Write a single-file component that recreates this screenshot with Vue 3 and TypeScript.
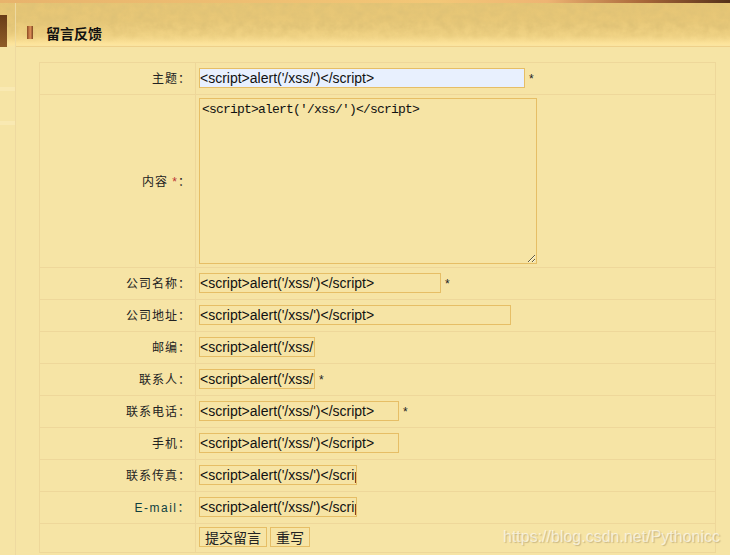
<template>
<div class="page">
    <svg class="texture" width="730" height="46" aria-hidden="true">
        <filter id="blotch">
            <feTurbulence type="fractalNoise" baseFrequency="0.11 0.13" numOctaves="3" seed="9" />
            <feColorMatrix values="0 0 0 0 0.74  0 0 0 0 0.54  0 0 0 0 0.18  0 0 0 2 -0.62" />
        </filter>
        <rect width="730" height="46" filter="url(#blotch)" />
    </svg>
    <div class="side">
        <div class="side-block"></div>
        <div class="side-band band-a"></div>
        <div class="side-band band-b"></div>
    </div>
    <div class="main">
        <div class="head">
            <span class="marker"></span>
            <h2 class="title">留言反馈</h2>
        </div>
        <form class="form" @submit.prevent>
            <table class="fields">
                <tr v-for="row in rows" :key="row.label" :class="{ tall: row.area }">
                    <th :class="{ latin: row.label === 'E-mail' }">{{ row.label }}<span v-if="row.area" class="red"> *</span>：</th>
                    <td>
                        <textarea v-if="row.area" class="area" :value="xss" readonly></textarea>
                        <input v-else class="text" :class="{ filled: row.filled }" :style="{ width: row.width + 'px' }" :value="xss" readonly />
                        <span v-if="row.must" class="must">*</span>
                    </td>
                </tr>
                <tr class="last">
                    <th></th>
                    <td>
                        <button class="btn" type="submit">提交留言</button>
                        <button class="btn" type="reset">重写</button>
                    </td>
                </tr>
            </table>
        </form>
    </div>
    <div class="mark">https://blog.csdn.net/Pythonicc</div>
</div>
</template>
<script setup lang="ts">
interface Row {
    label: string,
    width?: number,
    must?: boolean,
    area?: boolean,
    filled?: boolean,
}

const xss = `<script>alert('/xss/')<` + `/script>`;

const rows: Row[] = [
    { label: '主题', width: 326, must: true, filled: true },
    { label: '内容', area: true },
    { label: '公司名称', width: 242, must: true },
    { label: '公司地址', width: 312 },
    { label: '邮编', width: 116 },
    { label: '联系人', width: 116, must: true },
    { label: '联系电话', width: 200, must: true },
    { label: '手机', width: 200 },
    { label: '联系传真', width: 158 },
    { label: 'E-mail', width: 158 },
];
</script>
<style scoped>
.page {
    position: relative;
    display: flex;
    width: 730px;
    height: 555px;
    overflow: hidden;
    background: linear-gradient(180deg, #e6c575 0, #e8c878 45%, #f0d385 76%, #fde49c 94%, #f6e4a5 100%) top / 100% 47px no-repeat, #f6e4a5;
    font-family: "Liberation Sans", "Noto Sans CJK SC", sans-serif;
    color: #222;
}
.page::before {
    content: '';
    position: absolute;
    z-index: 2;
    left: 0;
    top: 0;
    width: 100%;
    height: 3px;
    background: linear-gradient(90deg, #e8b36c 0%, #f3c777 60%, #eeb473 75%, #a9683a 88%, #54301a 100%);
}
.texture {
    position: absolute;
    left: 0;
    top: 0;
    -webkit-mask-image: linear-gradient(180deg, #000 55%, transparent 92%);
    mask-image: linear-gradient(180deg, #000 55%, transparent 92%);
}
.side {
    position: relative;
    flex: none;
    width: 15px;
    border-right: 1px solid #eed9a0;
}
.side-block {
    width: 7px;
    height: 32px;
    margin-top: 15px;
    background: linear-gradient(180deg, #683c18, #8f5c28);
}
.side-band {
    position: absolute;
    left: 0;
    width: 15px;
    height: 4px;
    background: #f9e9b2;
}
.band-a {
    top: 87px;
}
.band-b {
    top: 121px;
}
.main {
    position: relative;
    flex: 1;
}
.head {
    display: flex;
    align-items: center;
    gap: 13px;
    box-sizing: border-box;
    height: 47px;
    padding: 19px 0 0 11px;
    border-bottom: 1px solid #eed08a;
}
.marker {
    width: 6px;
    height: 13px;
    background: linear-gradient(90deg, #8a4a22, #df8f58 55%, #7a4420);
}
.title {
    margin: 0;
    font-size: 14px;
    font-weight: bold;
    color: #111;
}
.form {
    padding: 15px 15px 0 23px;
}
.fields {
    width: 677px;
    border-collapse: collapse;
    table-layout: fixed;
}
th, td {
    height: 31px;
    padding: 0;
    border: 1px solid #eed79a;
    font-size: 12px;
}
th {
    width: 156px;
    padding: 0 4px 2px 0;
    box-sizing: border-box;
    text-align: right;
    font-weight: normal;
    letter-spacing: 1px;
}
th.latin {
    color: #0f3f3f;
    letter-spacing: 1.5px;
}
td {
    padding-left: 3px;
}
.tall th, .tall td {
    height: 172px;
}
.last th, .last td {
    height: 28px;
}
.red {
    color: #b33;
}
.text {
    box-sizing: border-box;
    height: 20px;
    margin-bottom: 2px;
    padding: 0;
    border: 1px solid #e6be66;
    background: transparent;
    font-family: "Liberation Sans", sans-serif;
    font-size: 14px;
    color: #111;
    vertical-align: middle;
    outline: none;
}
.text.filled {
    background: #e8f0fe;
}
.area {
    display: block;
    box-sizing: border-box;
    width: 338px;
    height: 166px;
    padding: 3px 2px;
    border: 1px solid #e6be66;
    background: transparent;
    font-family: "Liberation Mono", monospace;
    font-size: 13px;
    letter-spacing: -0.8px;
    color: #111;
    outline: none;
}
.must {
    margin-left: 4px;
    font-size: 12px;
    vertical-align: middle;
}
.btn {
    height: 20px;
    margin-right: 3px;
    margin-bottom: 2px;
    padding: 0 5px;
    border: 1px solid #e6be66;
    background: #f6e4a5;
    font-family: "Noto Sans CJK SC", sans-serif;
    font-size: 14px;
    line-height: 18px;
    color: #222;
    vertical-align: middle;
}
.mark {
    position: absolute;
    right: 10px;
    bottom: 9px;
    font-size: 16px;
    color: rgba(255, 255, 255, 0.62);
    text-shadow: 1px 1px 1px rgba(150, 130, 90, 0.45);
}
</style>
